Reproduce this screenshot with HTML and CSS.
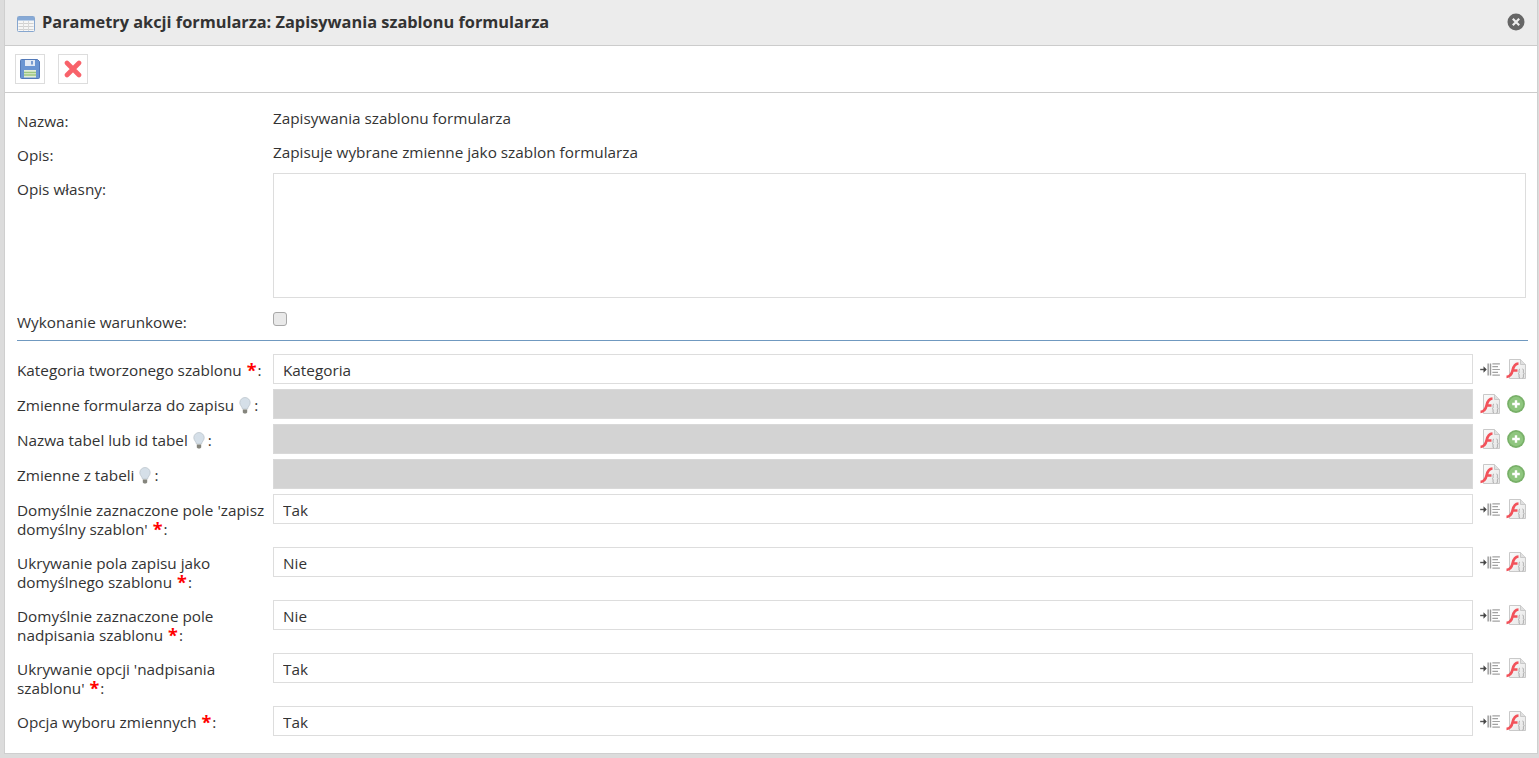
FILE: index.html
```html
<!DOCTYPE html>
<html lang="pl">
<head>
<meta charset="utf-8">
<title>Parametry akcji formularza</title>
<link rel="stylesheet" href="styles.css">
</head>
<body>
<svg class="defs" width="0" height="0" aria-hidden="true">
  <defs>
    <linearGradient id="g-page" x1="0" y1="0" x2="1" y2="1">
      <stop offset="0" stop-color="#fbfbfb"/><stop offset="1" stop-color="#e6e6e6"/>
    </linearGradient>
    <symbol id="i-flash" viewBox="0 0 20 20">
      <path d="M3.500 .5h11l5 5v14h-16z" fill="url(#g-page)" stroke="#c9c9c9"/>
      <path d="M14.500 .5v5h5" fill="#e0e0e0" stroke="#c9c9c9"/>
      <path d="M.5 17.800c4 0 5.300-2.800 6.200-6.800s2-6.300 5.800-6.500M6 11.500h5.500" fill="none" stroke="#f2525a" stroke-width="2.700"/>
      <path d="M14 10c-1.400 0-.8 2.400-.9 3.500-.1.800-.8 1.200-.8 1.200s.7.300.8 1.200c.1 1-.5 3.100.9 3.100M16.500 10c1.400 0 .8 2.400.9 3.500.1.800.8 1.200.8 1.200s-.7.300-.8 1.200c-.1 1 .5 3.100-.9 3.100" fill="none" stroke="#a8a8a8"/>
    </symbol>
    <symbol id="i-insert" viewBox="0 0 22 16">
      <path d="M0 8h4" stroke="#555" stroke-width="1.500"/>
      <path d="M3.500 4.500 7 8l-3.500 3.500z" fill="#444"/>
      <path d="M8.500 1.500v13M11 1.500v13" stroke="#9a9a9a" stroke-width="1.500" fill="none"/>
      <path d="M13 2h8M13 5h6M13 8h8M13 11h6M13 14h8" stroke="#a2a2a2" stroke-width="1.300"/>
    </symbol>
    <symbol id="i-plus" viewBox="0 0 18 18">
      <circle cx="9" cy="9" r="8.900" fill="#78b068"/>
      <circle cx="9" cy="9" r="7.200" fill="#8fc67f"/>
      <path d="M9 5.200v7.600M5.200 9h7.600" stroke="#fff" stroke-width="2.400"/>
    </symbol>
    <symbol id="i-bulb" viewBox="0 0 12 17">
      <path d="M6 .5a5.200 5.200 0 0 0-5.200 5.200c0 2.500 2.200 3.700 2.700 6.300h5c.5-2.600 2.700-3.800 2.700-6.300A5.200 5.200 0 0 0 6 .5z" fill="#d5dfe8" stroke="#bcc5cd" stroke-width=".8"/>
      <path d="M3.800 12.500h4.400v3l-1.200 1H5l-1.200-1z" fill="#85857d"/>
    </symbol>
  </defs>
</svg>
<main class="dialog">
  <header class="titlebar">
    <svg class="title-icon" viewBox="0 0 18 16" width="18" height="16" aria-hidden="true">
      <rect x=".5" y=".5" width="17" height="15" rx="1" fill="#f6f6f6" stroke="#86a6cf"/>
      <rect x="1" y="1" width="16" height="3.500" fill="#86a9d6"/>
      <path d="M1.500 7.500h15M1.500 10.500h15M1.500 13.500h15" stroke="#d0d0d0"/>
      <path d="M6.500 5v10M11.500 5v10" stroke="#d8d8d8"/>
    </svg>
    <h1 class="title">Parametry akcji formularza: Zapisywania szablonu formularza</h1>
    <svg class="close-icon" viewBox="0 0 18 18" width="18" height="18" aria-hidden="true">
      <circle cx="9" cy="9" r="8.500" fill="#666"/>
      <path d="M5.800 5.800l6.400 6.400M12.200 5.800l-6.400 6.400" stroke="#eee" stroke-width="2.200"/>
    </svg>
  </header>
  <div class="toolbar">
    <button class="tool" type="button" aria-label="Zapisz">
      <svg viewBox="0 0 20 20" width="20" height="20" aria-hidden="true">
        <path d="M.5 1.500a1 1 0 0 1 1-1h16l2 2v16a1 1 0 0 1-1 1h-17a1 1 0 0 1-1-1z" fill="#6a95d2" stroke="#5279b8"/>
        <rect x="5" y="1" width="10" height="6" fill="#e2eaf5"/>
        <rect x="11" y="2" width="2" height="3.500" fill="#7a9cd0"/>
        <rect x="4" y="11" width="12" height="7.500" fill="#e2edd6"/>
        <path d="M4 13.500h12M4 16h12" stroke="#9cc67f" stroke-width="1.300"/>
      </svg>
    </button>
    <button class="tool" type="button" aria-label="Anuluj">
      <svg viewBox="0 0 18 18" width="18" height="18" aria-hidden="true">
        <path d="M3 3l12 12M15 3L3 15" stroke="#f8626a" stroke-width="4.600" stroke-linecap="round"/>
      </svg>
    </button>
  </div>
  <form class="form">
    <div class="info-row name-row"><span class="label">Nazwa:</span><span class="value">Zapisywania szablonu formularza</span></div>
    <div class="info-row desc-row"><span class="label">Opis:</span><span class="value">Zapisuje wybrane zmienne jako szablon formularza</span></div>
    <div class="info-row own-row"><label class="label">Opis własny:</label><textarea class="area"></textarea></div>
    <div class="info-row cond-row"><label class="label">Wykonanie warunkowe:</label><input class="check" type="checkbox"></div>
    <hr class="divider">
    <div class="fields">
      <div class="row"><label class="label">Kategoria tworzonego szablonu <b class="req">*</b>:</label><input class="field" value="Kategoria"><span class="acts"><svg class="ins"><use href="#i-insert"/></svg><svg class="fl"><use href="#i-flash"/></svg></span></div>
      <div class="row"><label class="label">Zmienne formularza do zapisu <svg class="bulb"><use href="#i-bulb"/></svg>:</label><div class="field disabled"></div><span class="acts"><svg class="fl"><use href="#i-flash"/></svg><svg class="pl"><use href="#i-plus"/></svg></span></div>
      <div class="row"><label class="label">Nazwa tabel lub id tabel <svg class="bulb"><use href="#i-bulb"/></svg>:</label><div class="field disabled"></div><span class="acts"><svg class="fl"><use href="#i-flash"/></svg><svg class="pl"><use href="#i-plus"/></svg></span></div>
      <div class="row"><label class="label">Zmienne z tabeli <svg class="bulb"><use href="#i-bulb"/></svg>:</label><div class="field disabled"></div><span class="acts"><svg class="fl"><use href="#i-flash"/></svg><svg class="pl"><use href="#i-plus"/></svg></span></div>
      <div class="row tall"><label class="label">Domyślnie zaznaczone pole 'zapisz domyślny szablon' <b class="req">*</b>:</label><input class="field" value="Tak"><span class="acts"><svg class="ins"><use href="#i-insert"/></svg><svg class="fl"><use href="#i-flash"/></svg></span></div>
      <div class="row tall"><label class="label">Ukrywanie pola zapisu jako domyślnego szablonu <b class="req">*</b>:</label><input class="field" value="Nie"><span class="acts"><svg class="ins"><use href="#i-insert"/></svg><svg class="fl"><use href="#i-flash"/></svg></span></div>
      <div class="row tall"><label class="label">Domyślnie zaznaczone pole nadpisania szablonu <b class="req">*</b>:</label><input class="field" value="Nie"><span class="acts"><svg class="ins"><use href="#i-insert"/></svg><svg class="fl"><use href="#i-flash"/></svg></span></div>
      <div class="row tall"><label class="label">Ukrywanie opcji 'nadpisania szablonu' <b class="req">*</b>:</label><input class="field" value="Tak"><span class="acts"><svg class="ins"><use href="#i-insert"/></svg><svg class="fl"><use href="#i-flash"/></svg></span></div>
      <div class="row"><label class="label">Opcja wyboru zmiennych <b class="req">*</b>:</label><input class="field" value="Tak"><span class="acts"><svg class="ins"><use href="#i-insert"/></svg><svg class="fl"><use href="#i-flash"/></svg></span></div>
    </div>
  </form>
</main>
</body>
</html>
```

FILE: styles.css
```css
* { box-sizing: border-box; }
html, body { height: 100%; }
body {
  margin: 0;
  height: 758px;
  overflow: hidden;
  background: #dcdcdc;
  font-family: "Open Sans", sans-serif;
  font-size: 15.3px;
  color: #333;
  padding: 0 1px 4px 4px;
}
.defs { position: absolute; }
.dialog {
  height: 100%;
  background: #fff;
  border: 1px solid #cfcfcf;
  border-top: 0;
  display: flex;
  flex-direction: column;
}
.titlebar {
  height: 46px;
  flex: none;
  background: #ececec;
  border-bottom: 1px solid #ccc;
  display: flex;
  align-items: center;
  padding: 0 12px;
}
.title-icon { flex: none; margin-right: 7px; margin-top: 2px; }
.title {
  margin: 0;
  flex: 1;
  font-size: 16.35px;
  font-weight: 700;
  color: #333;
  line-height: 20px;
  padding-bottom: 2px;
}
.close-icon { flex: none; margin-top: -2px; }
.toolbar {
  height: 47px;
  flex: none;
  border-bottom: 1px solid #ccc;
  display: flex;
  align-items: center;
  gap: 13px;
  padding: 0 10px;
}
.tool {
  width: 30px;
  height: 30px;
  padding: 0;
  background: #fff;
  border: 1px solid #ddd;
  display: flex;
  align-items: center;
  justify-content: center;
}
.form { padding: 0 9px 0 12px; }
.label { display: block; width: 256px; flex: none; padding-right: 4px; line-height: 19px; }
.info-row { display: flex; }
.value { line-height: 19px; }
.name-row { padding-top: 16px; height: 34px; }
.name-row .label, .desc-row .label { padding-top: 3px; }
.desc-row { padding-top: 16px; height: 46px; }
.own-row { height: 125px; }
.own-row .label { padding-top: 7px; }
.area {
  width: 1253px;
  height: 125px;
  border: 1px solid #ddd;
  resize: none;
  outline: 0;
  display: block;
}
.cond-row { height: 42px; padding-top: 14px; }
.cond-row .label { padding-top: 1px; }
.check {
  appearance: none;
  width: 14px;
  height: 14px;
  margin: 0;
  background: #e9e9e9;
  border: 1px solid #a8a8a8;
  border-radius: 3px;
}
.divider {
  margin: 0 0 13px;
  border: 0;
  border-top: 1px solid #7099c0;
}
.fields { display: flex; flex-direction: column; gap: 5px; }
.row { display: flex; align-items: flex-start; min-height: 30px; }
.row .label { padding-top: 7px; }
.row.tall { min-height: 48px; }
.req { color: #f00; font-weight: 700; font-size: 18px; line-height: 14px; vertical-align: -1px; margin: 0 1px; }
.bulb { width: 12px; height: 17px; vertical-align: -3px; margin: 0 3px 0 1px; }
.field {
  width: 1200px;
  height: 30px;
  flex: none;
  border: 1px solid #ddd;
  background: #fff;
  padding: 2px 9px 0;
  font: 15.3px "Open Sans", sans-serif;
  color: #333;
  outline: 0;
  display: block;
}
.field.disabled { background: #d3d3d3; border-color: #d9d9d9; }
.acts { display: flex; align-items: center; height: 30px; margin-left: 7px; gap: 5px; }
.ins { width: 21px; height: 15px; }
.fl { width: 20px; height: 20px; }
.pl { width: 18px; height: 18px; margin-left: 2px; }
```
